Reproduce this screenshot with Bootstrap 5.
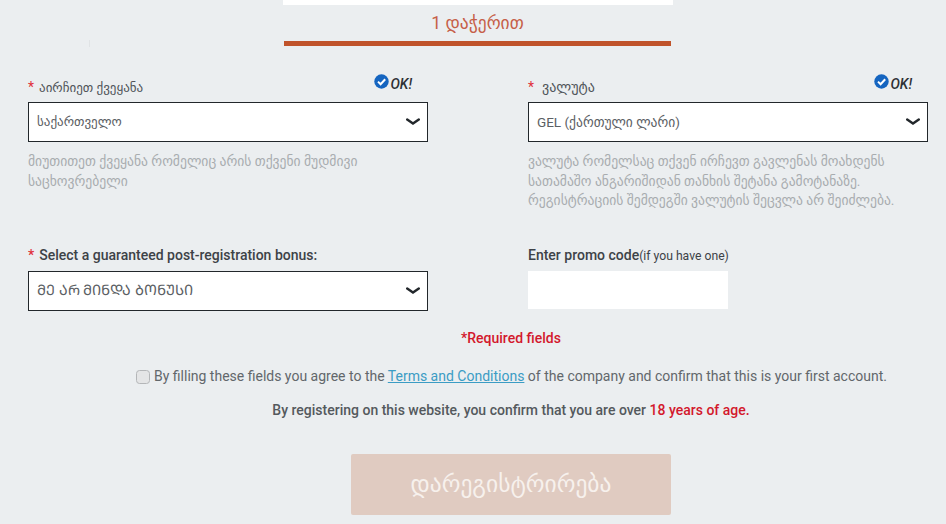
<!DOCTYPE html>
<html lang="ka">
<head>
    <meta charset="UTF-8">
    <meta name="viewport" content="width=device-width, initial-scale=1.0">
    <title>რეგისტრაცია</title>
    <link rel="stylesheet" href="https://cdn.jsdelivr.net/npm/bootstrap@5.3.0/dist/css/bootstrap.min.css">
    <style>
        body {
            background-color: #ebeef0;
            font-family: Roboto, "DejaVu Sans", sans-serif;
            font-size: 14px;
            color: #3d4247;
            overflow: hidden;
        }
        .top-strip {
            width: 390px;
            height: 5px;
            margin-left: 283px;
            background: #fff;
        }
        .tabs-row {
            height: 41px;
            padding-left: 89px;
        }
        .tab-faint {
            width: 195px;
            height: 7px;
            margin-top: 35px;
            border-left: 1px solid #e0e3e5;
        }
        .tab-active {
            width: 387px;
            height: 41px;
            padding-top: 8px;
            border-bottom: 5px solid #c0532b;
            color: #c65f48;
            font-size: 17.5px;
            line-height: 20px;
            text-align: center;
            box-sizing: border-box;
        }
        .form-grid {
            display: grid;
            grid-template-columns: 400px 400px;
            column-gap: 100px;
            padding-left: 28px;
            margin-top: 31px;
        }
        .field-head {
            height: 25px;
            line-height: 20px;
        }
        .req-star {
            color: #e0303a;
            margin-right: 5px;
        }
        .field-label {
            font-size: 13px;
            color: #50555a;
        }
        .field-label-wide {
            font-size: 14px;
        }
        .ok-mark {
            font-size: 14px;
            font-style: italic;
            font-weight: 500;
            color: #2d3135;
            line-height: 16px;
            margin-top: -3px;
        }
        .ok-mark svg {
            margin-right: 1px;
            margin-bottom: 5px;
        }
        .pick {
            height: 40px;
            border: 1px solid #22272b;
            border-radius: 0;
            padding: 0 30px 0 8px;
            font-size: 13px;
            color: #5b6064;
            background-color: #fff;
            background-image: url("data:image/svg+xml,%3Csvg xmlns='http://www.w3.org/2000/svg' viewBox='0 0 14 8'%3E%3Cpath d='M1.2 1.5 7 5.6l5.8-4.1' fill='none' stroke='%2322272b' stroke-width='2.4' stroke-linecap='round'/%3E%3C/svg%3E");
            background-position: right 7px center;
            background-size: 14px 8px;
        }
        .pick-latin {
            font-size: 13.5px;
        }
        .pick-caps {
            font-size: 14.4px;
        }
        .hint-text {
            margin: 10px 0 0;
            height: 91px;
            font-size: 13.6px;
            line-height: 19.5px;
            color: #a8acaf;
        }
        .second-head {
            height: 28px;
            font-weight: 500;
            line-height: 24px;
        }
        .small-note {
            font-size: 12.2px;
            font-weight: 400;
        }
        .promo-box {
            width: 200px;
            height: 38px;
            border: 0;
            border-radius: 0;
            background: #fff;
        }
        .required-line {
            margin-top: 17px;
            height: 27px;
            line-height: 20px;
            font-weight: 500;
            color: #d3182c;
            text-align: center;
            padding-left: 76px;
        }
        .terms-line {
            height: 45px;
            padding: 11px 0 0 136px;
            line-height: 20px;
            color: #62676b;
        }
        .terms-line a {
            color: #3b9cc4;
        }
        .terms-check {
            width: 14px;
            height: 14px;
            margin: 4px 4px 0 0;
            background-color: #e4e5e6;
            border: 1px solid #b4b6b8;
            border-radius: 2px;
        }
        .age-line {
            height: 54px;
            line-height: 20px;
            font-weight: 500;
            text-align: center;
            color: #54595d;
            padding-left: 76px;
        }
        .age-line span {
            color: #d3182c;
        }
        .btn.submit-btn {
            display: block;
            width: 320px;
            height: 61px;
            margin-left: 351px;
            border: 0;
            border-radius: 2px;
            background: #e0cbc1;
            color: #f7f1ed;
            font-size: 23.5px;
            font-weight: 400;
            opacity: 1;
        }
    </style>
</head>
<body>
    <div class="top-strip"></div>
    <div class="tabs-row d-flex">
        <div class="tab-faint"></div>
        <div class="tab-active">1 დაჭერით</div>
    </div>

    <form class="form-grid">
        <div>
            <div class="field-head d-flex justify-content-between align-items-start">
                <div><span class="req-star">*</span><span class="field-label">აირჩიეთ ქვეყანა</span></div>
                <div class="ok-mark me-3 d-flex align-items-center">
                    <svg width="15" height="15" viewBox="0 0 15 15"><circle cx="7.5" cy="7.5" r="7.2" fill="#1565c0"/><path d="M4 7.6l2.6 2.6 4.6-5" fill="none" stroke="#fff" stroke-width="2"/></svg>OK!
                </div>
            </div>
            <select class="form-select pick">
                <option>საქართველო</option>
            </select>
            <p class="hint-text">მიუთითეთ ქვეყანა რომელიც არის თქვენი მუდმივი საცხოვრებელი</p>
        </div>
        <div>
            <div class="field-head d-flex justify-content-between align-items-start">
                <div><span class="req-star me-2">*</span><span class="field-label field-label-wide">ვალუტა</span></div>
                <div class="ok-mark me-3 d-flex align-items-center">
                    <svg width="15" height="15" viewBox="0 0 15 15"><circle cx="7.5" cy="7.5" r="7.2" fill="#1565c0"/><path d="M4 7.6l2.6 2.6 4.6-5" fill="none" stroke="#fff" stroke-width="2"/></svg>OK!
                </div>
            </div>
            <select class="form-select pick pick-latin">
                <option>GEL (ქართული ლარი)</option>
            </select>
            <p class="hint-text">ვალუტა რომელსაც თქვენ ირჩევთ გავლენას მოახდენს სათამაშო ანგარიშიდან თანხის შეტანა გამოტანაზე. რეგისტრაციის შემდეგში ვალუტის შეცვლა არ შეიძლება.</p>
        </div>
        <div>
            <div class="second-head"><span class="req-star">*</span>Select a guaranteed post-registration bonus:</div>
            <select class="form-select pick pick-caps">
                <option>ᲛᲔ ᲐᲠ ᲛᲘᲜᲓᲐ ᲑᲝᲜᲣᲡᲘ</option>
            </select>
        </div>
        <div>
            <div class="second-head">Enter promo code<span class="small-note">(if you have one)</span></div>
            <input type="text" class="form-control promo-box">
        </div>
    </form>

    <div class="required-line">*Required fields</div>
    <div class="terms-line d-flex align-items-start">
        <input type="checkbox" class="form-check-input terms-check">
        <span>By filling these fields you agree to the <a href="#">Terms and Conditions</a> of the company and confirm that this is your first account.</span>
    </div>
    <div class="age-line">By registering on this website, you confirm that you are over <span>18 years of age.</span></div>
    <button type="button" class="btn submit-btn" disabled>დარეგისტრირება</button>

    <script src="https://cdn.jsdelivr.net/npm/bootstrap@5.3.0/dist/js/bootstrap.bundle.min.js"></script>
</body>
</html>
